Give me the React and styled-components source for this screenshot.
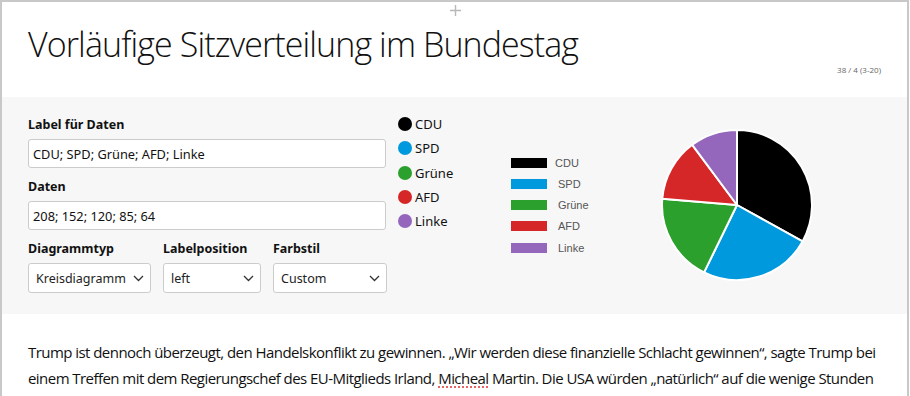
import React from "react";
import styled, { createGlobalStyle } from "styled-components";

const Global = createGlobalStyle`
  html, body { margin: 0; padding: 0; background: #fff; }
  body { overflow: hidden; }
`;

const Frame = styled.div`
  box-sizing: border-box;
  width: 909px;
  height: 396px;
  border: 2px solid #c8c8c8;
  border-bottom: none;
  overflow: hidden;
  background: #fff;
`;

const Header = styled.header`
  height: 95px;
  display: flex;
  flex-direction: column;
  padding: 0 26px;
`;

const PlusRow = styled.div`
  display: flex;
  justify-content: center;
  padding-top: 3px;
  padding-left: 1px;
  height: 12px;
`;

const Title = styled.h1`
  margin: 6px 0 0 0;
  font-family: "Open Sans", sans-serif;
  font-weight: 300;
  font-size: 34px;
  line-height: 42px;
  color: #111;
  letter-spacing: -0.9px;
`;

const PageInfo = styled.div`
  align-self: flex-end;
  margin-top: -1px;
  font-family: "Open Sans", sans-serif;
  font-size: 8px;
  color: #666;
`;

const Panel = styled.section`
  background: #f7f7f7;
  height: 217px;
  box-sizing: border-box;
  padding: 20px 26px 0 26px;
  display: flex;
  align-items: flex-start;
  font-family: "Noto Sans", sans-serif;
`;

const Form = styled.div`
  width: 358px;
  display: flex;
  flex-direction: column;
`;

const Label = styled.label`
  display: block;
  font-weight: 700;
  font-size: 12.5px;
  color: #111;
  line-height: 16px;
  margin-bottom: 6px;
`;

const Field = styled.div`
  margin-bottom: ${(p) => p.$mb || 0}px;
`;

const TextInput = styled.input`
  box-sizing: border-box;
  width: 100%;
  height: 29px;
  border: 1px solid #ccc;
  border-radius: 3px;
  background: #fff;
  padding: 0 4px;
  font-family: "Noto Sans", sans-serif;
  font-size: 12.8px;
  color: #111;
  outline: none;
`;

const SelectRow = styled.div`
  display: flex;
  gap: 12px;
`;

const SelectBox = styled.div`
  box-sizing: border-box;
  width: ${(p) => p.$w}px;
  height: 30px;
  border: 1px solid #ccc;
  border-radius: 3px;
  background: #fff;
  display: flex;
  align-items: center;
  justify-content: space-between;
  padding: 0 6px 0 7px;
  font-size: 12.5px;
  color: #222;
`;

const Legend = styled.ul`
  list-style: none;
  margin: -2px 0 0 12px;
  padding: 0;
  display: flex;
  flex-direction: column;
  gap: 6px;
`;

const LegendItem = styled.li`
  display: flex;
  align-items: center;
  gap: 3px;
  font-size: 13px;
  line-height: 18.3px;
  color: #111;
`;

const Dot = styled.span`
  width: 14px;
  height: 14px;
  border-radius: 50%;
  background: ${(p) => p.$c};
`;

const ChartWrap = styled.div`
  margin-left: 58px;
  margin-top: -4px;
`;

const Body = styled.div`
  padding: 25px 26px 0 26px;
  font-family: "Open Sans", sans-serif;
  font-size: 15px;
  line-height: 26px;
  color: #111;
  letter-spacing: -0.55px;
`;

const Para = styled.p`
  margin: 0;
`;

const Misspelled = styled.span`
  text-decoration: underline dotted #e03030;
  text-underline-offset: 3px;
`;

const data = [
  { label: "CDU", value: 208, color: "#000000" },
  { label: "SPD", value: 152, color: "#0099dd" },
  { label: "Grüne", value: 120, color: "#2ca02c" },
  { label: "AFD", value: 85, color: "#d62728" },
  { label: "Linke", value: 64, color: "#9467bd" },
];

const Chevron = () => (
  <svg width="11" height="7" viewBox="0 0 11 7" fill="none">
    <path d="M1 1l4.5 4.5L10 1" stroke="#333" strokeWidth="1.3" />
  </svg>
);

const Plus = () => (
  <svg width="11" height="11" viewBox="0 0 11 11">
    <path d="M5.5 0v11M0 5.5h11" stroke="#b8b8b8" strokeWidth="1.4" />
  </svg>
);

function PieChart() {
  const total = data.reduce((s, d) => s + d.value, 0);
  const cx = 226, cy = 92, r = 75;
  let acc = 0;
  const slices = data.map((d) => {
    const a0 = (acc / total) * Math.PI * 2;
    acc += d.value;
    const a1 = (acc / total) * Math.PI * 2;
    const x0 = cx + r * Math.sin(a0), y0 = cy - r * Math.cos(a0);
    const x1 = cx + r * Math.sin(a1), y1 = cy - r * Math.cos(a1);
    const large = a1 - a0 > Math.PI ? 1 : 0;
    return { ...d, path: `M${cx},${cy} L${x0},${y0} A${r},${r} 0 ${large} 1 ${x1},${y1} Z` };
  });
  const rows = [50, 71, 92, 113, 135];
  return (
    <svg width="320" height="180" viewBox="0 0 320 180">
      {data.map((d, i) => (
        <g key={d.label}>
          <rect x="0" y={rows[i] - 5} width="36" height="10" fill={d.color} />
          <text x={i === 0 ? 44 : 47} y={rows[i] + 4} fontFamily="Liberation Sans, Arial, sans-serif" fontSize="11" fill="#555">
            {d.label}
          </text>
        </g>
      ))}
      {slices.map((s) => (
        <path key={s.label} d={s.path} fill={s.color} stroke="#fff" strokeWidth="2" strokeLinejoin="round" />
      ))}
    </svg>
  );
}

export default function App() {
  return (
    <>
      <Global />
      <Frame>
        <Header>
          <PlusRow>
            <Plus />
          </PlusRow>
          <Title>Vorläufige Sitzverteilung im Bundestag</Title>
          <PageInfo>38 / 4 (3-20)</PageInfo>
        </Header>
        <Panel>
          <Form>
            <Field $mb={11}>
              <Label>Label für Daten</Label>
              <TextInput readOnly value="CDU; SPD; Grüne; AFD; Linke" />
            </Field>
            <Field $mb={11}>
              <Label>Daten</Label>
              <TextInput readOnly value="208; 152; 120; 85; 64" />
            </Field>
            <SelectRow>
              <Field>
                <Label>Diagrammtyp</Label>
                <SelectBox $w={123}>
                  Kreisdiagramm <Chevron />
                </SelectBox>
              </Field>
              <Field>
                <Label>Labelposition</Label>
                <SelectBox $w={98}>
                  left <Chevron />
                </SelectBox>
              </Field>
              <Field>
                <Label>Farbstil</Label>
                <SelectBox $w={114}>
                  Custom <Chevron />
                </SelectBox>
              </Field>
            </SelectRow>
          </Form>
          <Legend>
            {data.map((d) => (
              <LegendItem key={d.label}>
                <Dot $c={d.color} />
                {d.label}
              </LegendItem>
            ))}
          </Legend>
          <ChartWrap>
            <PieChart />
          </ChartWrap>
        </Panel>
        <Body>
          <Para>
            Trump ist dennoch überzeugt, den Handelskonflikt zu gewinnen. „Wir werden diese finanzielle Schlacht gewinnen“, sagte Trump bei einem Treffen mit dem Regierungschef des EU-Mitglieds Irland, <Misspelled>Micheal</Misspelled> Martin. Die USA würden „natürlich“ auf die wenige Stunden zuvor angekündigten EU-Gegenmaßnahmen reagieren. „Wir wurden lange Zeit ausgenutzt und wir werden nicht länger ausgenutzt“, sagte er.
          </Para>
        </Body>
      </Frame>
    </>
  );
}
